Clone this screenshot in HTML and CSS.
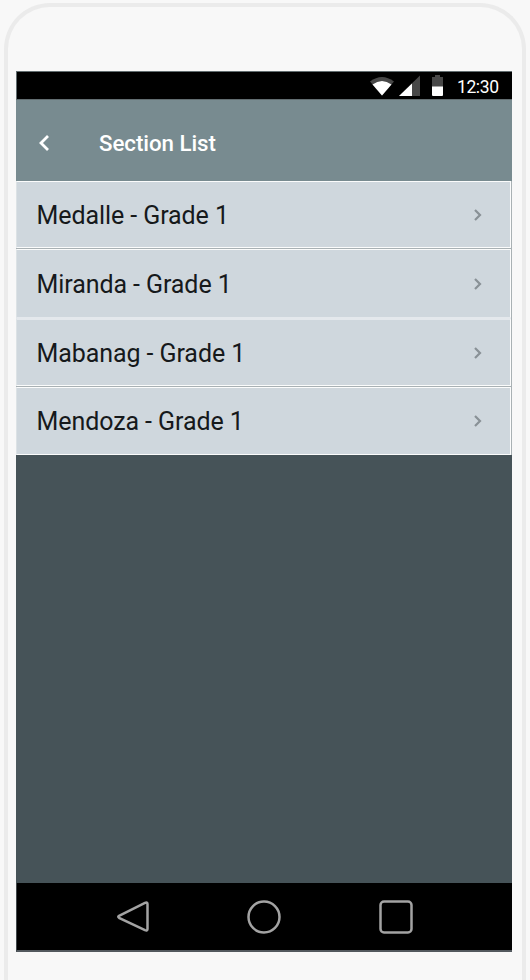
FILE: index.html
```html
<!DOCTYPE html>
<html lang="en">
<head>
<meta charset="utf-8">
<title>Section List</title>
<link rel="stylesheet" href="styles.css">
</head>
<body>
<div class="phone">
  <main class="screen">
    <div class="status">
      <svg class="signals" width="76" height="24" viewBox="0 0 76 24">
        <path d="M0 4.500Q12-4.500 24 4.500L12 18.500Z" fill="#484848"/>
        <path d="M2.500 7.500Q12 .5 21.500 7.500L12 18.500Z" fill="#fff"/>
        <path d="M29 19L50-1.500V19Z" fill="#484848"/>
        <path d="M29 19L42 6.500V19Z" fill="#fff"/>
        <path d="M62 0h3V-2h5v2h3v10H62Z" fill="#484848"/>
        <path d="M62 9.500h11v8.500a1 1 0 0 1-1 1h-9a1 1 0 0 1-1-1Z" fill="#fff"/>
      </svg>
      <span class="time">12:30</span>
    </div>
    <header class="header">
      <svg class="back" width="14" height="20" viewBox="0 0 14 20"><path d="M11 3L4 10L11 17" fill="none" stroke="#fff" stroke-width="2.800"/></svg>
      <h1 class="title">Section List</h1>
    </header>
    <ul class="list">
      <li class="row"><span class="name">Medalle - Grade 1</span><svg class="chevron" width="10" height="14" viewBox="0 0 10 14"><path d="M2 2L7 7L2 12" /></svg></li>
      <li class="row row-soft-end"><span class="name">Miranda - Grade 1</span><svg class="chevron" width="10" height="14" viewBox="0 0 10 14"><path d="M2 2L7 7L2 12" /></svg></li>
      <li class="row row-soft-start"><span class="name">Mabanag - Grade 1</span><svg class="chevron" width="10" height="14" viewBox="0 0 10 14"><path d="M2 2L7 7L2 12" /></svg></li>
      <li class="row"><span class="name">Mendoza - Grade 1</span><svg class="chevron" width="10" height="14" viewBox="0 0 10 14"><path d="M2 2L7 7L2 12" /></svg></li>
    </ul>
    <nav class="nav">
      <svg width="34" height="34" viewBox="0 0 34 34"><path d="M4 15.800L30 2.800Q32.500 1.800 32.500 4V29Q32.500 31.200 30 30.200L4 17.800Q2.500 16.800 4 15.800Z"/></svg>
      <svg width="34" height="34" viewBox="0 0 34 34"><circle cx="17" cy="17" r="15.500"/></svg>
      <svg width="34" height="34" viewBox="0 0 34 34"><rect x="1.500" y="1.500" width="31" height="31" rx="3.500"/></svg>
    </nav>
  </main>
</div>
</body>
</html>
```
FILE: styles.css
```css
* { box-sizing: border-box; }
body {
  margin: 0;
  height: 980px;
  padding: 3px 4px 0 4px;
  overflow: hidden;
  background: #f8f8f8;
  font-family: Roboto, sans-serif;
}
.phone {
  height: 977px;
  padding: 64px 8px 0;
  border: 4px solid #ebebeb;
  border-bottom: 0;
  border-radius: 46px 46px 0 0;
}
.screen {
  display: flex;
  flex-direction: column;
  width: 496px;
  height: 881px;
  background: #465358;
}
.status {
  display: flex;
  justify-content: flex-end;
  height: 29px;
  padding: 5px 13px 0 0;
  border: 1px solid #626d70;
  border-width: 1px 0 1px 1px;
  background: #000;
  color: #fff;
}
.signals { margin-right: 11px; overflow: visible; }
.time {
  width: 42px;
  font-size: 17.500px;
  line-height: 20px;
  font-weight: 400;
  letter-spacing: -.4px;
  white-space: nowrap;
}
.header {
  display: flex;
  align-items: center;
  height: 81px;
  padding: 4px 0 0 21px;
  background: #788b90;
  color: #fff;
}
.back { margin-right: 48px; }
.title {
  margin: 0;
  font-size: 22.300px;
  line-height: 28px;
  font-weight: 500;
  letter-spacing: -.05px;
}
.list {
  display: grid;
  grid-template-rows: 67px 1px 69px 68px 1px 68px;
  height: 274px;
  margin: 0;
  padding: 0 1px 0 0;
  list-style: none;
  background: #a9b1b4;
}
.row {
  display: flex;
  align-items: center;
  justify-content: space-between;
  padding: 1px 27px 0 19.500px;
  border: 1px solid #fbfcfc;
  border-left-color: #dce2e5;
  background: #cfd7dd;
}
.row:nth-child(2) { grid-row: 3; }
.row:nth-child(3) { grid-row: 4; }
.row:nth-child(4) { grid-row: 6; }
.row-soft-end { border-bottom-color: #e4e8ec; }
.row-soft-start { border-top: 2px solid #e4e8ec; }
.name {
  padding-top: 1px;
  font-size: 25px;
  line-height: 32px;
  letter-spacing: -.08px;
  color: #16191b;
}
.chevron { margin-top: -1px; fill: none; stroke: #899196; stroke-width: 2.200; }
.nav {
  display: flex;
  justify-content: center;
  gap: 98px;
  height: 69px;
  margin-top: auto;
  padding: 17px 2px 0 0;
  border-bottom: 2px solid #53595e;
  border-left: 1px solid #41484b;
  background: #000;
}
.nav svg { fill: none; stroke: #a3a3a3; stroke-width: 2.500; }
```
